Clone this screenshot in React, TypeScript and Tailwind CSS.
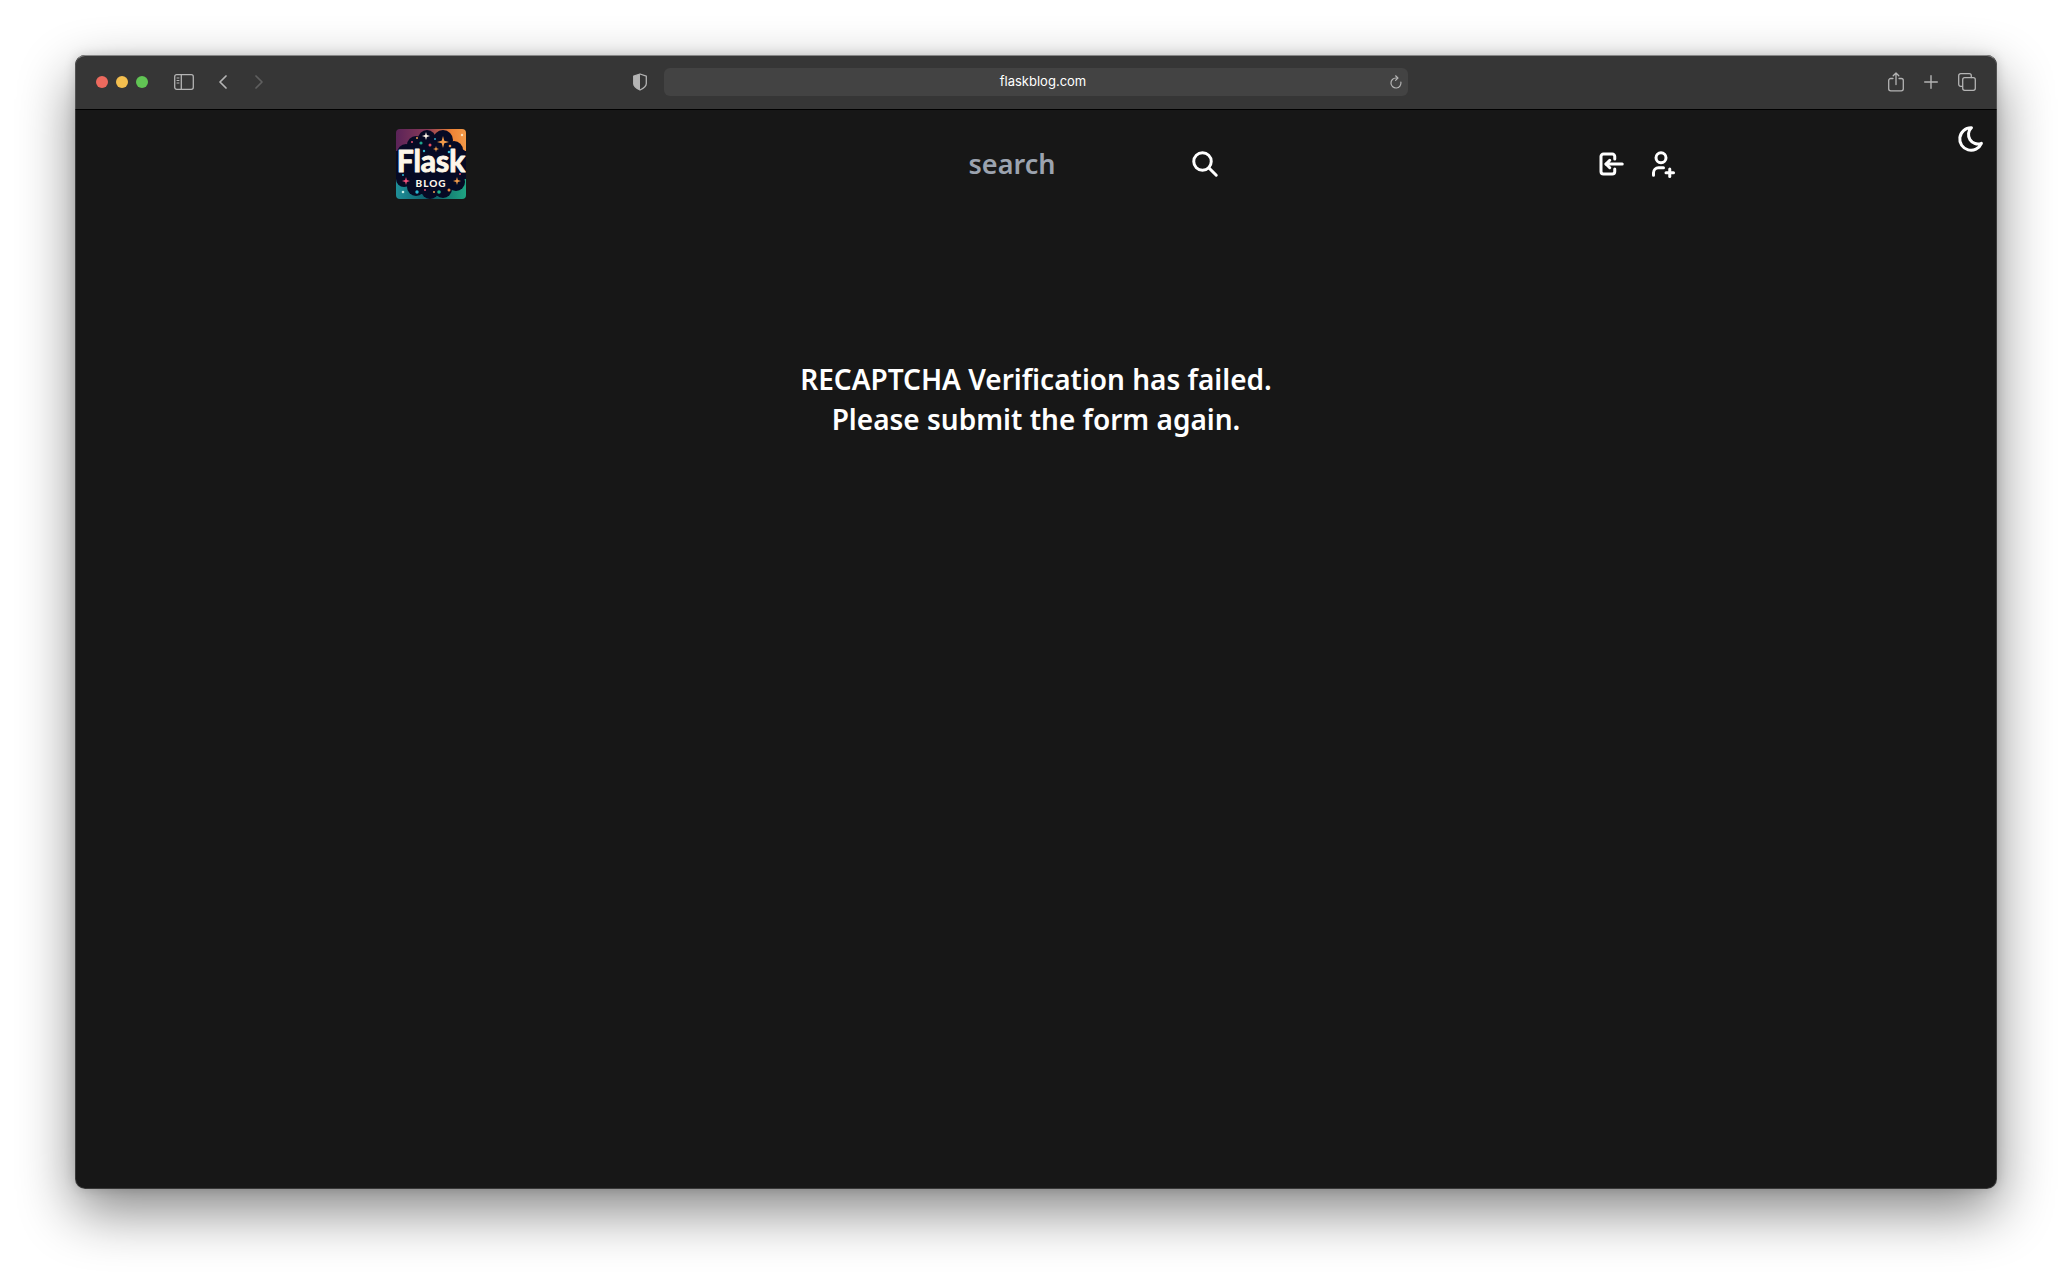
import { TbLogin, TbMoon, TbSearch, TbUserPlus } from "react-icons/tb";

const sparkle = (x: number, y: number, r: number) => {
  const k = r * 0.22;
  return `M${x} ${y - r}L${x + k} ${y - k}L${x + r} ${y}L${x + k} ${y + k}L${x} ${y + r}L${x - k} ${y + k}L${x - r} ${y}L${x - k} ${y - k}Z`;
};

const dots: [number, number, number, string][] = [
  [16, 13, 1, "#e0506a"],
  [21, 9, 1, "#f0a050"],
  [25, 14, 1.6, "#1fa58c"],
  [34, 16, 1.5, "#e84a5f"],
  [28, 22, 1.2, "#35b6cf"],
  [39, 10, 1, "#2fa8c4"],
  [54, 17, 1.3, "#f08a3c"],
  [66, 6, 1.2, "#fbe3c0"],
  [53, 23, 1.3, "#35b6cf"],
  [8, 23, 1, "#e0506a"],
  [7, 63, 1.3, "#c8f0e8"],
  [21, 63, 1.7, "#2ab5d0"],
  [29, 61, 1, "#e0506a"],
  [38, 63, 1, "#f0a050"],
  [43, 63, 1.8, "#1fb58c"],
  [53, 61, 1.5, "#f08a3c"],
  [7, 46, 1, "#2ab5d0"],
  [64, 45, 1, "#e0506a"],
];

function Logo() {
  return (
    <svg viewBox="0 0 70 70" className="size-[70px] rounded-sm" role="img" aria-label="Flask Blog">
      <defs>
        <linearGradient id="sky" x1="0" x2="1" y1="0" y2="0">
          <stop offset="0" stopColor="#5a2358" />
          <stop offset="0.45" stopColor="#8a3a58" />
          <stop offset="0.8" stopColor="#ef8436" />
          <stop offset="1" stopColor="#f39a48" />
        </linearGradient>
        <linearGradient id="sea" x1="0" x2="1" y1="0" y2="0">
          <stop offset="0" stopColor="#1f8f98" />
          <stop offset="0.5" stopColor="#0c5a66" />
          <stop offset="1" stopColor="#1fa582" />
        </linearGradient>
      </defs>
      <rect width="70" height="36" fill="url(#sky)" />
      <rect y="36" width="70" height="34" fill="url(#sea)" />
      <g fill="#060a24">
        <rect x="0" y="22" width="70" height="28" />
        <circle cx="10" cy="24" r="9" />
        <circle cx="20" cy="16" r="9" />
        <circle cx="31" cy="10" r="9" />
        <circle cx="47" cy="11" r="10" />
        <circle cx="58" cy="21" r="9" />
        <circle cx="64" cy="28" r="8" />
        <circle cx="8" cy="50" r="8" />
        <circle cx="20" cy="58" r="9" />
        <circle cx="34" cy="61" r="9" />
        <circle cx="47" cy="60" r="9" />
        <circle cx="60" cy="53" r="9" />
        <rect x="18" y="14" width="36" height="46" />
      </g>
      {dots.map(([x, y, r, fill]) => (
        <circle key={`${x}-${y}`} cx={x} cy={y} r={r} fill={fill} />
      ))}
      <path d={sparkle(30, 7, 4)} fill="#fdf3e6" />
      <path d={sparkle(47, 13, 6)} fill="#f09a4a" />
      <path d={sparkle(40, 20, 3)} fill="#f09a4a" />
      <path d={sparkle(10, 52, 4)} fill="#f0507a" />
      <path d={sparkle(61, 52, 4)} fill="#f09a4a" />
      <text x="35" y="43" textAnchor="middle" fontSize="30" fill="#fdf6e9" stroke="#fdf6e9" strokeWidth="1" strokeLinejoin="round" className="font-['Lato',sans-serif] font-bold">
        Flask
      </text>
      <text x="35" y="58" textAnchor="middle" fontSize="10" fill="#fdf6e9" className="font-['Lato',sans-serif] font-black tracking-widest">
        BLOG
      </text>
    </svg>
  );
}

const line = { fill: "none", stroke: "currentColor", strokeLinecap: "round", strokeLinejoin: "round" } as const;

function Toolbar() {
  return (
    <div className="flex h-[54px] items-center justify-between bg-[#363636] px-[21px] text-[#b4b4b4]">
      <div className="flex flex-1 items-center">
        <div className="flex gap-2">
          <button aria-label="Close" className="size-3 rounded-full bg-[#ed6a5e]" />
          <button aria-label="Minimize" className="size-3 rounded-full bg-[#f4bf4f]" />
          <button aria-label="Zoom" className="size-3 rounded-full bg-[#61c554]" />
        </div>
        <button aria-label="Sidebar" className="ml-[26px]">
          <svg viewBox="0 0 20 16" className="h-4 w-5" {...line} strokeWidth="1.3">
            <rect x="0.7" y="0.7" width="18.6" height="14.6" rx="2" />
            <path d="M7.3 1v14" />
            <path d="M3 4h2M3 6.5h2M3 9h2" strokeWidth="1" />
          </svg>
        </button>
        <button aria-label="Back" className="ml-6">
          <svg viewBox="0 0 10 14" className="h-3.5 w-2.5" {...line} strokeWidth="1.7">
            <path d="M8 1L2 7l6 6" />
          </svg>
        </button>
        <button aria-label="Forward" disabled className="ml-[26px] text-[#5f5f5f]">
          <svg viewBox="0 0 10 14" className="h-3.5 w-2.5" {...line} strokeWidth="1.7">
            <path d="M2 1l6 6-6 6" />
          </svg>
        </button>
      </div>
      <div className="flex w-2/5 items-center">
        <button aria-label="Privacy report" className="-ml-7 mr-4">
          <svg viewBox="0 0 16 18" className="h-[18px] w-4">
            <path d="M8 1L14.3 3.2V10.5C14.3 13.5 11 15.6 8 17 5 15.6 1.7 13.5 1.7 10.5V3.2Z" {...line} strokeWidth="1.3" />
            <path d="M8 1V17C5 15.6 1.7 13.5 1.7 10.5V3.2Z" fill="currentColor" />
          </svg>
        </button>
        <div className="mr-1 flex h-7 flex-1 items-center rounded-md bg-[#434343] pr-1.5">
          <input
            aria-label="Address"
            defaultValue="flaskblog.com"
            className="min-w-0 flex-1 bg-transparent pl-8 text-center font-['Inter',sans-serif] text-[13px] text-white outline-none"
          />
          <button aria-label="Reload">
            <svg viewBox="0 0 12 14" className="h-3.5 w-3" {...line} strokeWidth="1.2">
              <path d="M10.9 7.2A5 5 0 1 1 6 3H7.6" />
              <path d="M5.6 0.8L7.9 3 5.6 5.3" />
            </svg>
          </button>
        </div>
      </div>
      <div className="flex flex-1 items-center justify-end gap-5">
        <button aria-label="Share">
          <svg viewBox="0 0 16 20" className="h-5 w-4" {...line} strokeWidth="1.3">
            <path d="M5 6.5H2.7a2 2 0 0 0-2 2v8.3a2 2 0 0 0 2 2h10.6a2 2 0 0 0 2-2V8.5a2 2 0 0 0-2-2H11" />
            <path d="M8 12.5V1.2M5.2 3.8L8 1l2.8 2.8" />
          </svg>
        </button>
        <button aria-label="New tab">
          <svg viewBox="0 0 14 14" className="size-3.5" {...line} strokeWidth="1.4">
            <path d="M7 0.7v12.6M0.7 7h12.6" />
          </svg>
        </button>
        <button aria-label="Tab overview">
          <svg viewBox="0 0 18 18" className="size-[18px]" {...line} strokeWidth="1.3">
            <rect x="4.7" y="4.7" width="12.6" height="12.6" rx="2" />
            <path d="M4.5 13.3H2.7a2 2 0 0 1-2-2V2.7a2 2 0 0 1 2-2h8.6a2 2 0 0 1 2 2V4.5" />
          </svg>
        </button>
      </div>
    </div>
  );
}

export default function App() {
  return (
    <div className="flex min-h-screen flex-col bg-white px-[75px] pt-[55px] pb-[95px] font-['Noto_Sans',sans-serif]">
      <div className="relative flex flex-1 flex-col rounded-[10px] shadow-[0_22px_55px_rgba(0,0,0,0.48),0_0_12px_rgba(0,0,0,0.15)]">
        <div className="flex flex-1 flex-col overflow-hidden rounded-[10px] bg-[#171717]">
          <Toolbar />
          <main className="relative flex-1 border-t border-black text-white">
            <button aria-label="Toggle theme" className="absolute top-3.5 right-[11px]">
              <TbMoon size={30} className="stroke-[2.4]" />
            </button>
            <nav className="mx-auto flex h-27 max-w-7xl items-center justify-between">
              <a href="#home" aria-label="Home">
                <Logo />
              </a>
              <form className="flex items-center gap-2">
                <input
                  aria-label="Search"
                  placeholder="search"
                  className="w-[340px] bg-transparent text-center text-[27px] font-semibold outline-none placeholder:text-[#9ca3af]"
                />
                <button type="button" aria-label="Submit search">
                  <TbSearch size={30} className="stroke-[2.4]" />
                </button>
              </form>
              <div className="flex gap-5">
                <a href="#login" aria-label="Log in">
                  <TbLogin size={30} className="stroke-[2.4]" />
                </a>
                <a href="#signup" aria-label="Sign up">
                  <TbUserPlus size={30} className="stroke-[2.4]" />
                </a>
              </div>
            </nav>
            <h1 className="mt-[141px] text-center text-[28px] leading-10 font-semibold">
              RECAPTCHA Verification has failed.
              <br />
              Please submit the form again.
            </h1>
          </main>
        </div>
        <div className="pointer-events-none absolute inset-0 rounded-[10px] border border-white/15 border-t-white/40" />
      </div>
    </div>
  );
}
